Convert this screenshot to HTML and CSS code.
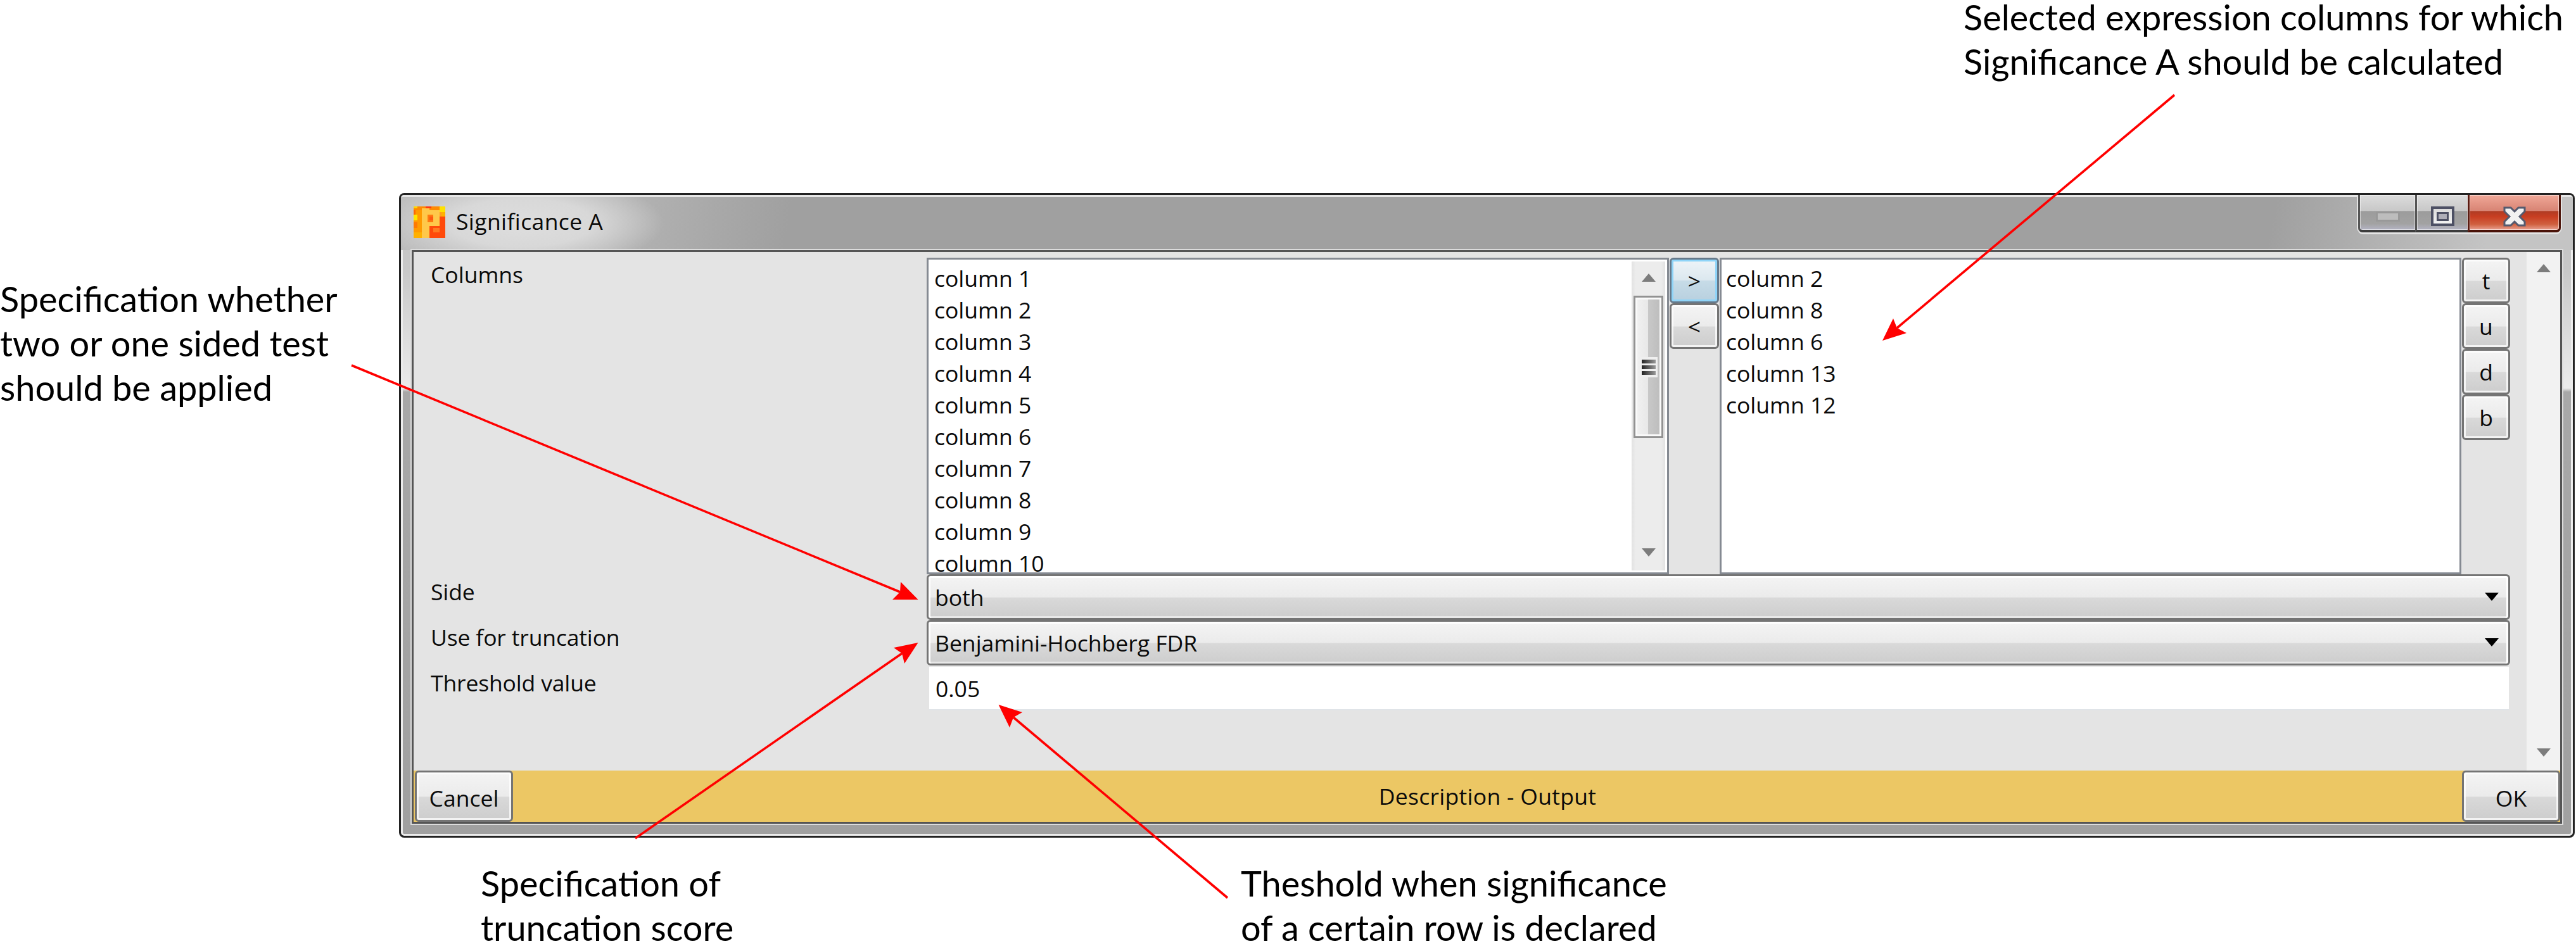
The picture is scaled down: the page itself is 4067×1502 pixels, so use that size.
FILE: index.html
```html
<!DOCTYPE html>
<html lang="en">
<head>
<meta charset="utf-8">
<title>Significance A</title>
<link rel="stylesheet" href="styles.css">
</head>
<body>
<div class="page">
  <section class="window">
    <header class="titlebar">
      <svg class="app-icon" viewBox="0 0 16 16" shape-rendering="crispEdges" aria-hidden="true">
        <rect width="16" height="16" fill="#ff4a0a"/>
        <rect width="5" height="16" fill="#ff9a00"/>
        <rect y="0" width="16" height="2" fill="#ff8a00"/>
        <rect x="0" y="0" width="2" height="1" fill="#ffd800"/>
        <rect x="0" y="4" width="2" height="3" fill="#ffe600"/>
        <rect x="0" y="2" width="1" height="2" fill="#ff6a00"/>
        <rect x="0" y="8" width="2" height="3" fill="#ff7a00"/>
        <rect x="0" y="13" width="4" height="3" fill="#ffb000"/>
        <rect x="6" y="0" width="3" height="1" fill="#ff3a10"/>
        <rect x="13" y="0" width="3" height="3" fill="#ffe000"/>
        <rect x="12" y="3" width="2" height="2" fill="#ff9c20"/>
        <rect x="14" y="3" width="2" height="2" fill="#ffb000"/>
        <rect x="4" y="1" width="4" height="15" fill="#ffc84a"/>
        <rect x="4" y="2" width="9" height="8" fill="#ffc84a"/>
        <rect x="7" y="4" width="3" height="4" fill="#ff7a10"/>
        <rect x="8" y="5" width="2" height="2" fill="#ff5a10"/>
        <rect x="10" y="11" width="3" height="2" fill="#ff7a20"/>
      </svg>
      <span class="title-text">Significance A</span>
      <div class="caption-buttons">
        <div class="caption caption-min"><span class="min-glyph"></span></div>
        <div class="caption caption-max"><span class="max-glyph"><span class="max-inner"></span></span></div>
        <div class="caption caption-close">
          <svg class="close-glyph" viewBox="0 0 36 32" aria-hidden="true">
            <path d="M2 2H12L18 8L24 2H34V8L26 16L34 24V30H24L18 24L12 30H2V24L10 16L2 8Z" fill="#f2f2f2" stroke="#555a6e" stroke-width="3"/>
          </svg>
        </div>
      </div>
    </header>
    <div class="frame-body">
      <div class="client">
        <div class="main">
          <div class="form">
            <div class="label label-first">Columns</div>
            <div class="picker">
              <div class="list list-source">
                <div class="items">
                  <div class="item">column 1</div>
                  <div class="item">column 2</div>
                  <div class="item">column 3</div>
                  <div class="item">column 4</div>
                  <div class="item">column 5</div>
                  <div class="item">column 6</div>
                  <div class="item">column 7</div>
                  <div class="item">column 8</div>
                  <div class="item">column 9</div>
                  <div class="item">column 10</div>
                </div>
                <div class="list-scroll">
                  <svg class="tri tri-up" viewBox="0 0 22 13" aria-hidden="true"><path d="M11 0L22 13H0Z"/></svg>
                  <div class="thumb"><div class="grip"><i></i><i></i><i></i></div></div>
                  <svg class="tri tri-down" viewBox="0 0 22 13" aria-hidden="true"><path d="M0 0H22L11 13Z"/></svg>
                </div>
              </div>
              <div class="btn-col btn-col-move">
                <div class="btn btn-active">&gt;</div>
                <div class="btn">&lt;</div>
              </div>
              <div class="list list-target">
                <div class="items">
                  <div class="item">column 2</div>
                  <div class="item">column 8</div>
                  <div class="item">column 6</div>
                  <div class="item">column 13</div>
                  <div class="item">column 12</div>
                </div>
              </div>
              <div class="btn-col btn-col-order">
                <div class="btn">t</div>
                <div class="btn">u</div>
                <div class="btn">d</div>
                <div class="btn">b</div>
              </div>
            </div>
            <div class="label">Side</div>
            <div class="combo"><span>both</span><i class="combo-arrow"></i></div>
            <div class="label">Use for truncation</div>
            <div class="combo"><span>Benjamini-Hochberg FDR</span><i class="combo-arrow"></i></div>
            <div class="label">Threshold value</div>
            <div class="field">0.05</div>
          </div>
          <div class="page-scroll">
            <svg class="tri tri-up" viewBox="0 0 22 13" aria-hidden="true"><path d="M11 0L22 13H0Z"/></svg>
            <svg class="tri tri-down" viewBox="0 0 22 13" aria-hidden="true"><path d="M0 0H22L11 13Z"/></svg>
          </div>
        </div>
        <footer class="footer">
          <div class="btn btn-cancel">Cancel</div>
          <div class="footer-text">Description - Output</div>
          <div class="btn btn-ok">OK</div>
        </footer>
      </div>
    </div>
  </section>

  <div class="note note-side">
    <span>Specification whether</span><span>two or one sided test</span><span>should be applied</span>
  </div>
  <div class="note note-selected">
    <span>Selected expression columns for which</span><span>Significance A should be calculated</span>
  </div>
  <div class="note note-trunc">
    <span>Specification of</span><span>truncation score</span>
  </div>
  <div class="note note-thresh">
    <span>Theshold when significance</span><span>of a certain row is declared</span>
  </div>

  <svg class="arrows" viewBox="0 0 4067 1502" aria-hidden="true">
    <g class="arrow-lines">
      <line x1="555" y1="577" x2="1421" y2="935"/>
      <line x1="1003" y1="1324" x2="1424" y2="1032"/>
      <line x1="3433" y1="150" x2="2995" y2="518"/>
      <line x1="1938" y1="1418" x2="1600" y2="1133"/>
    </g>
    <g class="arrow-heads">
      <polygon points="1449.5,947 1422,919 1421,935 1409,947"/>
      <polygon points="1449.5,1015 1411,1023 1424,1032 1428,1048"/>
      <polygon points="2972,538 2989,503 2995,518 3010,526"/>
      <polygon points="1576.5,1113 1614,1125 1600,1133 1594,1149"/>
    </g>
  </svg>
</div>
</body>
</html>
```

FILE: styles.css
```css
* { box-sizing: border-box; }
html, body { margin: 0; padding: 0; background: #fff; }
.page {
  position: relative;
  width: 4067px;
  height: 1502px;
  padding: 305px 2px 0 630px;
  overflow: hidden;
  font-family: "Open Sans", "Noto Sans", sans-serif;
  font-size: 35.5px;
  color: #0a0a0a;
}

/* window chrome */
.window {
  display: flex;
  flex-direction: column;
  height: 1018px;
  border: 3px solid #222;
  border-radius: 8px;
  background: linear-gradient(180deg, #c2c2c2 0, #c8c8c8 120px, #ececec 305px, #a8a8a8 311px, #a0a0a0 100%);
  box-shadow: inset 0 0 0 3px #ececec;
  overflow: hidden;
}
.titlebar {
  display: flex;
  align-items: flex-start;
  flex: none;
  height: 87px;
  padding: 18px 19px 0 20px;
  background:
    radial-gradient(ellipse 225px 76px at 190px 44px, #dedede 0, #d8d8d8 50%, rgba(216,216,216,.5) 75%, rgba(216,216,216,0) 100%),
    linear-gradient(100deg, #bcbcbc 0, #b4b4b4 10%, #a0a0a0 18%, #a0a0a0 86%, #c4c4c4 96%);
  box-shadow: inset 0 3px 0 #e6e6e6;
}
.app-icon { width: 50px; height: 50px; flex: none; }
.title-text { margin: -1px 0 0 17px; letter-spacing: .4px; }
.caption-buttons {
  display: flex;
  height: 59px;
  margin: -18px 0 0 auto;
  border-radius: 0 0 7px 7px;
  box-shadow: 0 3px 0 #e4e4e4, -2px 0 0 #e4e4e4, 2px 0 0 #e4e4e4;
}
.caption {
  display: flex;
  align-items: center;
  justify-content: center;
  padding-top: 12px;
  border-left: 3px solid #555;
  border-bottom: 4px solid #3c3c3c;
  box-shadow: inset 0 0 0 1px rgba(255,255,255,.55);
}
.caption-min {
  width: 90px;
  border-radius: 0 0 0 7px;
  background: linear-gradient(180deg, #dcdcdc 0, #c8c8c8 45%, #9c9c9c 47%, #a2a2a2 82%, #b4b4c4 100%);
}
.caption-max {
  width: 83px;
  background: linear-gradient(180deg, #dcdcdc 0, #c8c8c8 45%, #9c9c9c 47%, #a2a2a2 82%, #b4b4c4 100%);
}
.caption-close {
  width: 147px;
  border-left-color: #5a1a10;
  border-right: 3px solid #4a1208;
  border-bottom-color: #4a1208;
  border-radius: 0 0 7px 0;
  background: linear-gradient(180deg, #f0a898 0, #d88474 45%, #b03c24 47%, #c83e22 62%, #d0603f 84%, #e8a090 100%);
}
.min-glyph { width: 38px; height: 16px; border: 3px solid #999; background: #bdbdbd; }
.max-glyph {
  display: flex;
  align-items: center;
  justify-content: center;
  width: 37px;
  height: 31px;
  border: 4px solid #4d5064;
  background: linear-gradient(180deg, #dcdcdc, #f2f2f2);
}
.max-inner { width: 19px; height: 14px; border: 3px solid #4d5064; background: #aeaeb8; }
.close-glyph { width: 36px; height: 32px; }

.frame-body { display: flex; flex: 1; padding: 0 17px 19px; }
.client {
  display: flex;
  flex: 1;
  flex-direction: column;
  border: 3px solid #555;
  background: #e4e4e4;
  box-shadow: 0 0 0 2px #dcdcdc;
}
.main { display: flex; flex: 1; }

/* form grid */
.form {
  display: grid;
  flex: 1;
  grid-template-columns: 810px 1fr;
  grid-template-rows: 500px 72px 72px auto;
  align-content: start;
  padding: 9px 26px 0 0;
}
.label { padding: 3px 0 0 27px; letter-spacing: -.15px; }
.label-first { padding-top: 2px; letter-spacing: 0; }
.picker { display: flex; height: 500px; }
.list {
  display: flex;
  border: 3px solid #858a92;
  background: #fff;
  overflow: hidden;
}
.list-source { width: 1172px; margin-right: 1px; padding-right: 3px; }
.list-target { flex: 1; margin: 0 1px; }
.items { flex: 1; padding: 4px 0 0 9px; overflow: hidden; }
.list-target .items { padding-left: 7px; }
.item { height: 50px; line-height: 50px; white-space: nowrap; }
.list-scroll {
  display: flex;
  flex: none;
  flex-direction: column;
  align-items: center;
  width: 53px;
  margin: 3px 0;
  background: linear-gradient(90deg, #e2e2e2, #ececec 12%, #ececec 88%, #e2e2e2);
}
.tri { display: block; width: 22px; height: 13px; fill: #7c7c7c; flex: none; }
.list-scroll .tri-up { margin-top: 19px; }
.list-scroll .tri-down { margin: auto 0 22px; }
.thumb {
  display: flex;
  align-items: center;
  justify-content: center;
  width: 47px;
  height: 225px;
  margin-top: 22px;
  border: 3px solid #929292;
  box-shadow: inset 0 0 0 3px #fafafa;
  background: linear-gradient(90deg, #f2f2f2, #e8e8e8 48%, #c8c8c8 50%, #bcbcbc);
}
.grip {
  display: flex;
  flex-direction: column;
  gap: 3px;
  padding: 4px 3px;
  background: #efefef;
}
.grip i { display: block; width: 22px; height: 6px; background: linear-gradient(90deg, #222, #999); }

/* buttons */
.btn-col { display: flex; flex: none; flex-direction: column; }
.btn-col-move { width: 78px; }
.btn-col-order { width: 76px; }
.btn {
  display: flex;
  align-items: center;
  justify-content: center;
  height: 72px;
  border: 3px solid #747474;
  border-radius: 6px;
  background: linear-gradient(180deg, #f4f4f4 0, #ebebeb 50%, #d9d9d9 52%, #cdcdcd 100%);
  box-shadow: inset 0 0 0 3px rgba(255,255,255,.75);
}
.btn-active {
  border-color: #66798a;
  background: linear-gradient(180deg, #eef4f8 0, #dce8ef 48%, #c6dbe7 52%, #b8d0df 100%);
  box-shadow: inset 0 0 0 3px #8fd4f8;
}
.combo {
  display: flex;
  align-items: center;
  justify-content: space-between;
  height: 72px;
  padding: 0 15px 0 10px;
  border: 3px solid #747474;
  border-radius: 6px;
  background: linear-gradient(180deg, #f4f4f4 0, #ebebeb 50%, #d9d9d9 52%, #cdcdcd 100%);
  box-shadow: inset 0 3px 0 #fff, inset 3px 0 0 #fff, inset -3px 0 0 #fff, inset 0 -3px 0 #e8e8e8;
}
.combo-arrow {
  width: 0;
  height: 0;
  margin-top: -2px;
  border-left: 11px solid transparent;
  border-right: 11px solid transparent;
  border-top: 13px solid #000;
}
.field {
  display: flex;
  align-items: center;
  height: 67px;
  margin: 2px 2px 0 4px;
  padding-left: 10px;
  background: #fff;
  box-shadow: 0 2px 0 #e0e4e8;
}
.page-scroll {
  display: flex;
  flex: none;
  flex-direction: column;
  align-items: center;
  justify-content: space-between;
  width: 53px;
  padding: 19px 0 22px;
  background: #f2f2f2;
}

/* footer */
.footer {
  display: flex;
  flex: none;
  height: 81px;
  background: #ecc764;
}
.footer .btn { flex: none; height: 81px; padding-top: 5px; }
.btn-cancel { width: 155px; margin-left: 2px; }
.btn-ok { width: 155px; }
.footer-text { flex: 1; padding-top: 16px; text-align: center; letter-spacing: .3px; }

/* annotations around the screenshot */
.note {
  position: absolute;
  display: flex;
  flex-direction: column;
  gap: 16px;
  font-family: Lato, "Open Sans", sans-serif;
  font-size: 55.9px;
  line-height: 54px;
  color: #000;
  white-space: nowrap;
}
.note-side { left: 0; top: 445px; }
.note-selected { left: 3100px; top: 0; }
.note-trunc { left: 759px; top: 1368px; }
.note-thresh { left: 1959px; top: 1368px; }
.arrows { position: absolute; left: 0; top: 0; width: 4067px; height: 1502px; pointer-events: none; }
.arrow-lines line { stroke: #f00; stroke-width: 3.6; }
.arrow-heads polygon { fill: #f00; }
```
